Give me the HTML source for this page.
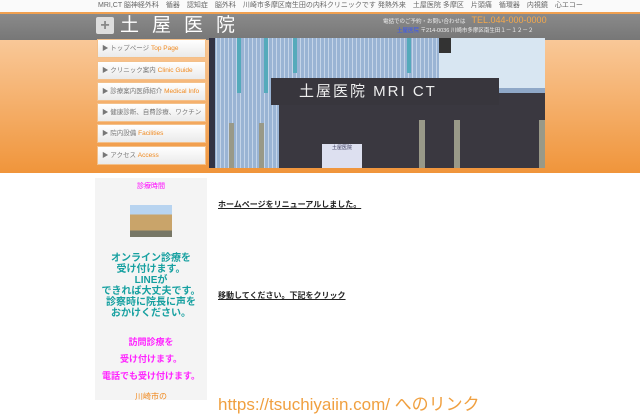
<!DOCTYPE html>
<html><head><meta charset="utf-8"><style>
*{margin:0;padding:0;box-sizing:border-box}
body{width:640px;height:400px;overflow:hidden;background:#fff;font-family:"Liberation Sans","Noto Sans CJK JP",sans-serif;position:relative}
.top{position:absolute;left:0;top:0;width:640px;height:12px;background:#fafafa;font-size:7px;color:#666;line-height:12px;padding-left:98px;white-space:nowrap}
.oline{position:absolute;top:12px;left:0;width:640px;height:2px;background:#f0a050}
.hdr{position:absolute;top:14px;left:0;width:640px;height:26px;background:linear-gradient(#8a8a8a,#777)}
.band{position:absolute;top:40px;left:0;width:640px;height:133px;background:linear-gradient(#f9c898,#f0953b)}
.logo{position:absolute;left:96px;top:17px;width:18px;height:17px;background:#ddd;border-radius:2px;color:#888;font-size:16px;line-height:17px;text-align:center;font-weight:bold}
.title{position:absolute;left:120px;top:14px;font-size:19px;color:#fff;letter-spacing:13px;line-height:24px}
.tel1{position:absolute;left:383px;top:15px;font-size:5.5px;color:#eee;white-space:nowrap}
.tel1 b{color:#f5a84a;font-size:9px;font-weight:normal;margin-left:6px}
.tel2{position:absolute;left:397px;top:26px;font-size:5.5px;color:#eee;white-space:nowrap}
.tel2 span{color:#3355ff}
.nav{position:absolute;left:97px;width:109px;height:19px;background:linear-gradient(#fff,#eaeaea);border:1px solid #f3c08a;font-size:6.5px;color:#777;line-height:17px;padding-left:4px;white-space:nowrap;overflow:hidden}
.nav i{font-style:normal;color:#f08a20}
.photo{position:absolute;left:209px;top:38px;width:336px;height:130px;background:#8fa8c8;overflow:hidden}
.side{position:absolute;left:95px;top:178px;width:112px;height:222px;background:#f4f4f4;text-align:center}
.mag{color:#f0f;font-size:7px}
.teal{color:#16a0a0;font-size:10px;font-weight:bold;line-height:11px}
.pink{color:#f2f;font-size:9px;font-weight:bold;line-height:17px}
.main a{position:absolute;left:218px;font-size:8px;color:#222;text-decoration:underline;font-weight:bold}
</style></head><body>
<div class="top">MRI,CT 脳神経外科　循器　認知症　脳外科　川崎市多摩区南生田の内科クリニックです 発熱外来　土屋医院 多摩区　片頭痛　循環器　内視鏡　心エコー</div>
<div class="oline"></div>
<div class="hdr"></div>
<div class="band"></div>
<div class="logo">+</div>
<div class="title">土屋医院</div>
<div class="tel1">電話でのご予約・お問い合わせは<b>TEL.044-000-0000</b></div>
<div class="tel2"><span>土屋医院</span> 〒214-0036 川崎市多摩区南生田１－１２－２</div>
<div class="nav" style="top:39px">▶ トップページ <i>Top Page</i></div>
<div class="nav" style="top:61px">▶ クリニック案内 <i>Clinic Guide</i></div>
<div class="nav" style="top:82px">▶ 診療案内医師紹介 <i>Medical Info</i></div>
<div class="nav" style="top:103px">▶ 健康診断、自費診療、ワクチン</div>
<div class="nav" style="top:124px">▶ 院内設備 <i>Facilities</i></div>
<div class="nav" style="top:146px">▶ アクセス <i>Access</i></div>
<div class="photo">
 <div style="position:absolute;left:0;top:0;width:230px;height:130px;background:repeating-linear-gradient(90deg,#9ab4d4 0 3px,#c4d4e8 3px 4px),#a8bcd8"></div>
 <div style="position:absolute;left:0;top:0;width:6px;height:130px;background:#334"></div>
 <div style="position:absolute;left:28px;top:0;width:4px;height:55px;background:#5ab"></div>
 <div style="position:absolute;left:55px;top:0;width:4px;height:55px;background:#5ab"></div>
 <div style="position:absolute;left:84px;top:0;width:4px;height:35px;background:#5ab"></div>
 <div style="position:absolute;left:198px;top:0;width:4px;height:35px;background:#5ab"></div>
 <div style="position:absolute;left:230px;top:0;width:106px;height:50px;background:#d8e6f2"></div>
 <div style="position:absolute;left:230px;top:0;width:12px;height:15px;background:#333"></div>
 <div style="position:absolute;left:70px;top:55px;width:266px;height:75px;background:#3a3840"></div>
 <div style="position:absolute;left:62px;top:40px;width:228px;height:27px;background:#38363d;color:#eee;font-size:15px;line-height:27px;padding-left:28px;letter-spacing:2px">土屋医院 MRI CT</div>
 <div style="position:absolute;left:20px;top:85px;width:5px;height:45px;background:#998"></div>
 <div style="position:absolute;left:50px;top:85px;width:5px;height:45px;background:#998"></div>
 <div style="position:absolute;left:210px;top:82px;width:6px;height:48px;background:#998"></div>
 <div style="position:absolute;left:245px;top:82px;width:6px;height:48px;background:#998"></div>
 <div style="position:absolute;left:330px;top:82px;width:6px;height:48px;background:#998"></div>
 <div style="position:absolute;left:113px;top:106px;width:40px;height:24px;background:#dde0f0;font-size:5px;text-align:center;color:#335">土屋医院</div>
</div>
<div class="side">
 <div class="mag" style="margin-top:3px">診療時間</div>
 <div style="margin:14px auto 0;width:42px;height:32px;background:linear-gradient(#b8d4f0 0 30%,#c9a46a 30% 80%,#776 80%)"></div>
 <div class="teal" style="margin-top:16px">オンライン診療を<br>受け付けます。<br>LINEが<br>できれば大丈夫です。<br>診察時に院長に声を<br>おかけください。</div>
 <div class="pink" style="margin-top:15px">訪問診療を<br>受け付けます。<br>電話でも受け付けます。</div>
 <div style="color:#f08a20;font-size:8px;margin-top:6px">川崎市の</div>
</div>
<div class="main">
 <a style="top:199px">ホームページをリニューアルしました。</a>
 <a style="top:290px">移動してください。下記をクリック</a>
 <div style="position:absolute;left:218px;top:390px;color:#f0a040;font-size:17px;white-space:nowrap">https://tsuchiyaiin.com/ へのリンク</div>
</div>
</body></html>
